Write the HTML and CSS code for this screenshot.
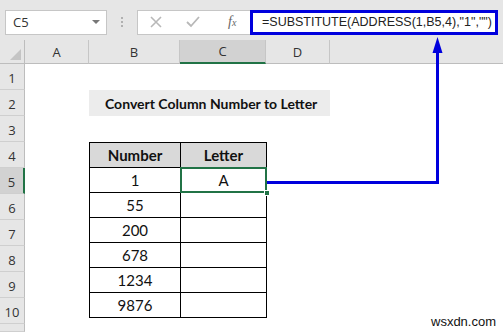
FILE: index.html
```html
<!DOCTYPE html>
<html lang="en">
<head>
    <meta charset="UTF-8">
    <meta name="viewport" content="width=device-width, initial-scale=1.0">
    <title>Convert Column Number to Letter</title>
    <link rel="stylesheet" href="styles.css">
</head>
<body>
    <div class="toolbar">
        <div class="name-box">
            <span>C5</span>
            <span class="caret"></span>
        </div>
        <div class="dots">
            <i></i><i></i><i></i>
        </div>
        <div class="fx-buttons">
            <svg width="12" height="12" viewBox="0 0 12 12"><path d="M1 1 L11 11 M11 1 L1 11" stroke="#b8b8b8" stroke-width="1.6" fill="none"/></svg>
            <svg width="14" height="12" viewBox="0 0 14 12"><path d="M1 6 L5 10 L13 1" stroke="#b8b8b8" stroke-width="1.8" fill="none"/></svg>
            <span class="fx">f<sub>x</sub></span>
        </div>
        <div class="formula">=SUBSTITUTE(ADDRESS(1,B5,4),"1","")</div>
    </div>

    <div class="sheet">
        <div class="corner"><span></span></div>
        <div class="col-head">A</div>
        <div class="col-head">B</div>
        <div class="col-head active">C</div>
        <div class="col-head">D</div>
        <div class="col-head last"></div>

        <div class="row-head" style="grid-row: 2">1</div>
        <div class="row-head" style="grid-row: 3">2</div>
        <div class="row-head" style="grid-row: 4">3</div>
        <div class="row-head" style="grid-row: 5">4</div>
        <div class="row-head active" style="grid-row: 6">5</div>
        <div class="row-head" style="grid-row: 7">6</div>
        <div class="row-head" style="grid-row: 8">7</div>
        <div class="row-head" style="grid-row: 9">8</div>
        <div class="row-head" style="grid-row: 10">9</div>
        <div class="row-head" style="grid-row: 11">10</div>
        <div class="row-head" style="grid-row: 12"></div>

        <div class="title">Convert Column Number to Letter</div>

        <table class="data">
            <tr><th>Number</th><th>Letter</th></tr>
            <tr><td>1</td><td class="selected">A</td></tr>
            <tr><td>55</td><td></td></tr>
            <tr><td>200</td><td></td></tr>
            <tr><td>678</td><td></td></tr>
            <tr><td>1234</td><td></td></tr>
            <tr><td>9876</td><td></td></tr>
        </table>
    </div>

    <svg class="connector" width="503" height="332" viewBox="0 0 503 332">
        <path d="M267 182.5 H437.5 V50" stroke="#0000dd" stroke-width="3" fill="none"/>
        <polygon points="437.5,37 442.5,53 432.5,53" fill="#0000dd"/>
    </svg>

    <div class="watermark">wsxdn.com</div>
</body>
</html>
```

FILE: styles.css
```css
body {
    margin: 0;
    width: 503px;
    height: 332px;
    overflow: hidden;
    background-color: #ffffff;
    font-family: "Open Sans", "Noto Sans", sans-serif;
    position: relative;
}

.toolbar {
    display: flex;
    align-items: center;
    height: 40px;
    padding: 4px 0 0 5px;
    box-sizing: border-box;
    background-color: #e6e6e6;
}

.name-box {
    display: flex;
    align-items: center;
    justify-content: space-between;
    width: 102px;
    height: 25px;
    box-sizing: border-box;
    padding: 0 6px 0 7px;
    background-color: #ffffff;
    border: 1px solid #c6c6c6;
    font-size: 13px;
    color: #333333;
}

.caret {
    width: 0;
    height: 0;
    border-left: 4px solid transparent;
    border-right: 4px solid transparent;
    border-top: 4px solid #777777;
}

.dots {
    display: flex;
    flex-direction: column;
    gap: 2px;
    width: 30px;
    align-items: center;
}

.dots i {
    display: block;
    width: 2px;
    height: 2px;
    background-color: #b0b0b0;
}

.fx-buttons {
    display: flex;
    align-items: center;
    width: 113px;
    height: 25px;
    box-sizing: border-box;
    padding-left: 12px;
    gap: 24px;
    background-color: #ffffff;
    border: 1px solid #c6c6c6;
    border-right: none;
}

.fx {
    font-family: "Liberation Serif", serif;
    font-style: italic;
    font-size: 14px;
    color: #666666;
    margin-left: 4px;
}

.fx sub {
    font-size: 10px;
    vertical-align: 0;
}

.formula {
    width: 248px;
    height: 25px;
    box-sizing: border-box;
    border: 3px solid #0000dd;
    background-color: #ffffff;
    padding-left: 9px;
    font-family: "Liberation Sans", Arial, sans-serif;
    font-size: 12.5px;
    line-height: 19px;
    color: #222222;
    white-space: nowrap;
}

.sheet {
    display: grid;
    grid-template-columns: 25px 64px 91px 86px 64px 1fr;
    grid-template-rows: 24px repeat(10, 26px) 8px;
    font-family: "Open Sans", "Noto Sans", sans-serif;
}

.corner {
    grid-row: 1;
    grid-column: 1;
    background-color: #e6e6e6;
    border-right: 1px solid #bdbdbd;
    border-bottom: 1px solid #bdbdbd;
    position: relative;
}

.corner span {
    position: absolute;
    right: 3px;
    bottom: 3px;
    width: 0;
    height: 0;
    border-left: 11px solid transparent;
    border-bottom: 11px solid #c4c4c4;
}

.col-head {
    grid-row: 1;
    background-color: #e6e6e6;
    border-right: 1px solid #c6c6c6;
    border-bottom: 1px solid #bdbdbd;
    display: flex;
    align-items: center;
    justify-content: center;
    font-size: 13px;
    color: #333333;
}

.col-head.active {
    background-color: #d2d2d2;
    border-bottom: 2px solid #217346;
}

.col-head.last {
    border-right: none;
}

.row-head {
    grid-column: 1;
    background-color: #e6e6e6;
    border-right: 1px solid #bdbdbd;
    border-bottom: 1px solid #cfcfcf;
    display: flex;
    align-items: center;
    justify-content: center;
    font-size: 13px;
    color: #333333;
    padding-top: 3px;
    box-sizing: border-box;
}

.row-head.active {
    background-color: #d2d2d2;
    border-right: 2px solid #217346;
}

.title {
    grid-row: 3;
    grid-column: 3 / 6;
    background-color: #ececec;
    display: flex;
    align-items: center;
    padding-left: 16px;
    font-family: Lato, "Open Sans", sans-serif;
    font-weight: bold;
    font-size: 14px;
    color: #111111;
    white-space: nowrap;
}

.data {
    grid-row: 5 / 12;
    grid-column: 3 / 5;
    border-collapse: collapse;
    align-self: start;
    width: 178px;
    font-family: Lato, "Open Sans", sans-serif;
    font-size: 15px;
    color: #111111;
}

.data th,
.data td {
    border: 1px solid #000000;
    height: 24px;
    padding: 0;
    text-align: center;
}

.data th {
    background-color: #d9d9d9;
    font-weight: bold;
}

.data th:first-child,
.data td:first-child {
    width: 90px;
}

.data td.selected {
    position: relative;
}

.data td.selected::after {
    content: "";
    position: absolute;
    left: -1px;
    top: -1px;
    right: -1px;
    bottom: -1px;
    border: 2px solid #217346;
}

.data td.selected::before {
    content: "";
    position: absolute;
    right: -4px;
    bottom: -4px;
    width: 6px;
    height: 6px;
    background-color: #217346;
    border: 1px solid #ffffff;
    box-sizing: border-box;
    z-index: 1;
}

.connector {
    position: absolute;
    left: 0;
    top: 0;
    pointer-events: none;
}

.watermark {
    position: absolute;
    left: 428px;
    top: 314px;
    padding: 0 3px;
    background-color: #ffffff;
    font-family: "Liberation Sans", Arial, sans-serif;
    font-size: 13px;
    color: #111111;
}
```
